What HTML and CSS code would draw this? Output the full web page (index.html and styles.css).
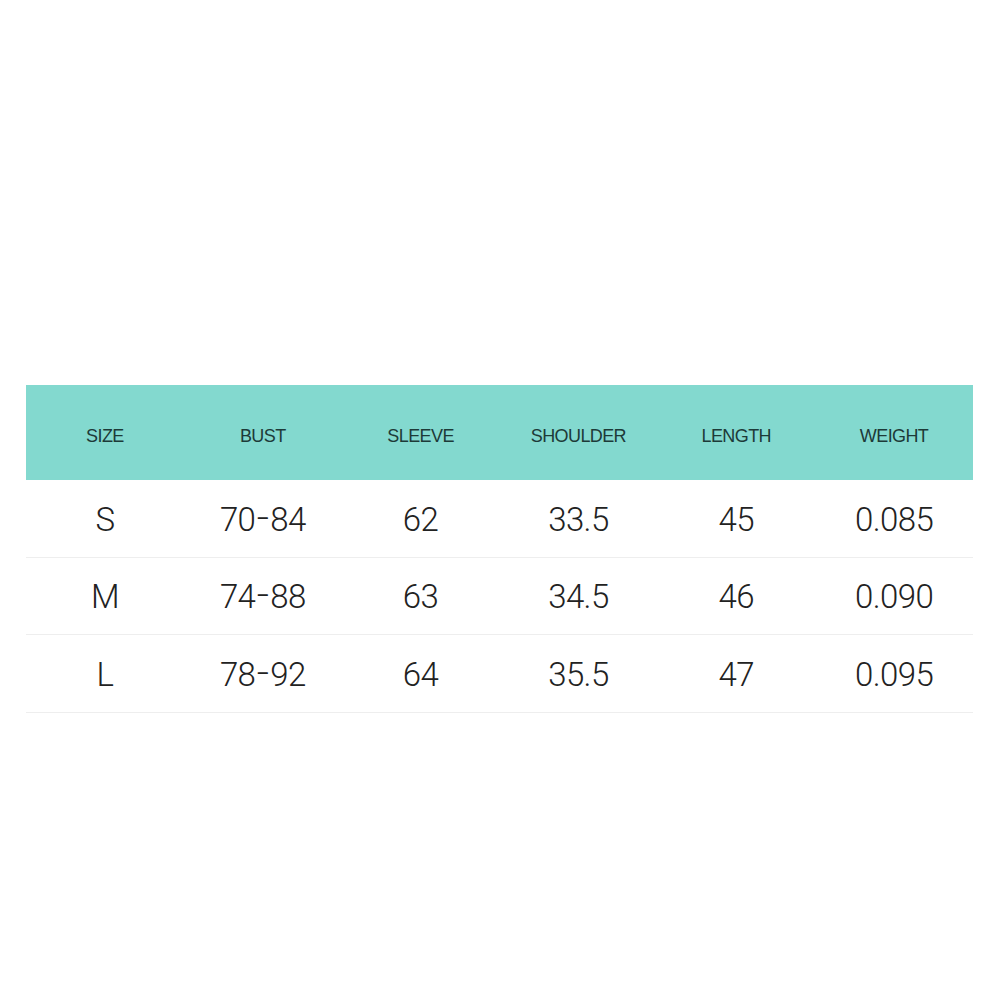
FILE: index.html
```html
<!DOCTYPE html>
<html>
<head>
<meta charset="utf-8">
<link rel="stylesheet" href="styles.css">
</head>
<body>
<div class="page">
  <div class="table">
    <div class="row head">
      <div class="cell">SIZE</div>
      <div class="cell">BUST</div>
      <div class="cell">SLEEVE</div>
      <div class="cell">SHOULDER</div>
      <div class="cell">LENGTH</div>
      <div class="cell">WEIGHT</div>
    </div>
    <div class="row body">
      <div class="cell">S</div>
      <div class="cell">70<span class="dash">-</span>84</div>
      <div class="cell">62</div>
      <div class="cell">33.5</div>
      <div class="cell">45</div>
      <div class="cell">0.085</div>
    </div>
    <div class="row body">
      <div class="cell">M</div>
      <div class="cell">74<span class="dash">-</span>88</div>
      <div class="cell">63</div>
      <div class="cell">34.5</div>
      <div class="cell">46</div>
      <div class="cell">0.090</div>
    </div>
    <div class="row body">
      <div class="cell">L</div>
      <div class="cell">78<span class="dash">-</span>92</div>
      <div class="cell">64</div>
      <div class="cell">35.5</div>
      <div class="cell">47</div>
      <div class="cell">0.095</div>
    </div>
  </div>
</div>
</body>
</html>
```
FILE: styles.css
```css
html, body {
  margin: 0;
  padding: 0;
  background: #ffffff;
}
.page {
  width: 1001px;
  height: 1001px;
  padding: 385px 28px 0 26px;
  box-sizing: border-box;
  font-family: "Liberation Sans", Arial, sans-serif;
}
.table {
  width: 947px;
  display: flex;
  flex-direction: column;
}
.row {
  display: grid;
  grid-template-columns: repeat(6, 1fr);
  align-items: center;
}
.cell {
  text-align: center;
}
.head {
  background: #83d9cf;
  height: 95px;
  color: #1d3a38;
  font-size: 18px;
  letter-spacing: -0.6px;
  padding-top: 7px;
  box-sizing: border-box;
}
.body {
  height: 77.6px;
  border-bottom: 1px solid #eeeeee;
  box-sizing: border-box;
  color: #222222;
  font-family: Roboto, "Liberation Sans", sans-serif;
  font-weight: 300;
  font-size: 33px;
  letter-spacing: -0.6px;
  padding-top: 2px;
}
.dash {
  display: inline-block;
  position: relative;
  top: -2px;
  margin: 0 3px;
  transform: scaleX(1.3);
}
```
